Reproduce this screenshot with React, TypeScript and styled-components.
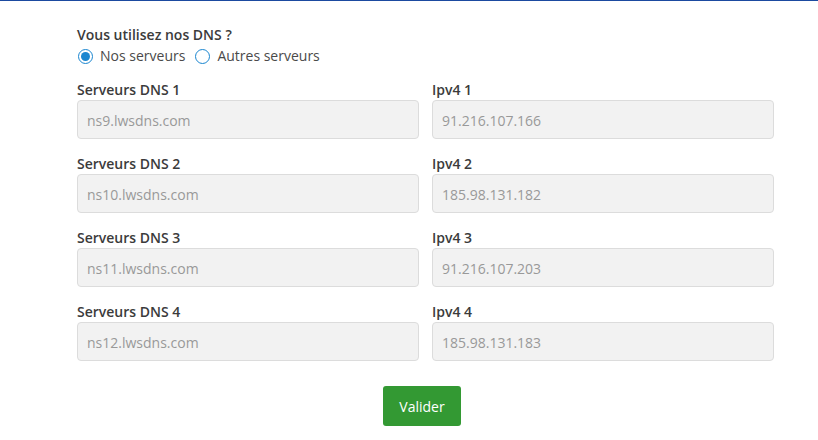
import React, { useState } from "react";
import styled, { createGlobalStyle } from "styled-components";

const Global = createGlobalStyle`
  html, body { margin: 0; padding: 0; background: #fff; }
  body { font-family: "Open Sans", "Liberation Sans", sans-serif; }
  * { box-sizing: border-box; }
`;

const Page = styled.div`
  width: 818px;
  height: 440px;
  border-top: 1px solid #1b4aa0;
  background: #fff;
`;

const Form = styled.form`
  width: 697px;
  margin-left: 77px;
  padding-top: 24px;
  display: flex;
  flex-direction: column;
`;

const Question = styled.div`
  font-size: 14px;
  line-height: 20px;
  font-weight: 600;
  color: #3b3b3b;
`;

const RadioRow = styled.div`
  display: flex;
  align-items: center;
  gap: 9px;
  height: 20px;
  margin-top: 1px;
  margin-bottom: 14px;
`;

const RadioLabel = styled.label`
  display: flex;
  align-items: center;
  gap: 7px;
  font-size: 14px;
  line-height: 20px;
  color: #4a4a4a;
  cursor: pointer;
`;

const RadioDot = styled.span<{ $checked: boolean }>`
  width: 15px;
  height: 15px;
  border-radius: 50%;
  border: 1.5px solid #1a86d0;
  background: #fff;
  display: inline-flex;
  align-items: center;
  justify-content: center;
  margin-left: 1px;
  &::after {
    content: "";
    width: 9px;
    height: 9px;
    border-radius: 50%;
    background: ${(p) => (p.$checked ? "#1a86d0" : "transparent")};
  }
`;

const Grid = styled.div`
  display: grid;
  grid-template-columns: 342px 342px;
  column-gap: 13px;
  row-gap: 15px;
`;

const Field = styled.div`
  display: flex;
  flex-direction: column;
`;

const Label = styled.label`
  font-size: 14px;
  line-height: 20px;
  font-weight: 600;
  color: #3b3b3b;
`;

const Input = styled.input`
  height: 39px;
  width: 100%;
  border: 1px solid #dcdcdc;
  border-radius: 4px;
  background: #f2f2f2;
  padding: 2px 9px 0;
  font-family: "Open Sans", "Liberation Sans", sans-serif;
  font-size: 14px;
  color: #999;
  outline: none;
`;

const ButtonRow = styled.div`
  display: flex;
  justify-content: center;
  padding-right: 7px;
  margin-top: 25px;
`;

const Button = styled.button`
  width: 78px;
  height: 40px;
  border: none;
  border-radius: 3px;
  background: #339933;
  color: #fff;
  font-family: "Open Sans", "Liberation Sans", sans-serif;
  font-size: 14px;
  cursor: pointer;
`;

const rows = [
  ["ns9.lwsdns.com", "91.216.107.166"],
  ["ns10.lwsdns.com", "185.98.131.182"],
  ["ns11.lwsdns.com", "91.216.107.203"],
  ["ns12.lwsdns.com", "185.98.131.183"],
];

export default function App() {
  const [ours, setOurs] = useState(true);
  return (
    <Page>
      <Global />
      <Form onSubmit={(e) => e.preventDefault()}>
        <Question>Vous utilisez nos DNS ?</Question>
        <RadioRow>
          <RadioLabel onClick={() => setOurs(true)}>
            <RadioDot $checked={ours} />
            Nos serveurs
          </RadioLabel>
          <RadioLabel onClick={() => setOurs(false)}>
            <RadioDot $checked={!ours} />
            Autres serveurs
          </RadioLabel>
        </RadioRow>
        <Grid>
          {rows.map(([ns, ip], i) => (
            <React.Fragment key={i}>
              <Field>
                <Label>Serveurs DNS {i + 1}</Label>
                <Input readOnly value={ns} />
              </Field>
              <Field>
                <Label>Ipv4 {i + 1}</Label>
                <Input readOnly value={ip} />
              </Field>
            </React.Fragment>
          ))}
        </Grid>
        <ButtonRow>
          <Button type="submit">Valider</Button>
        </ButtonRow>
      </Form>
    </Page>
  );
}
